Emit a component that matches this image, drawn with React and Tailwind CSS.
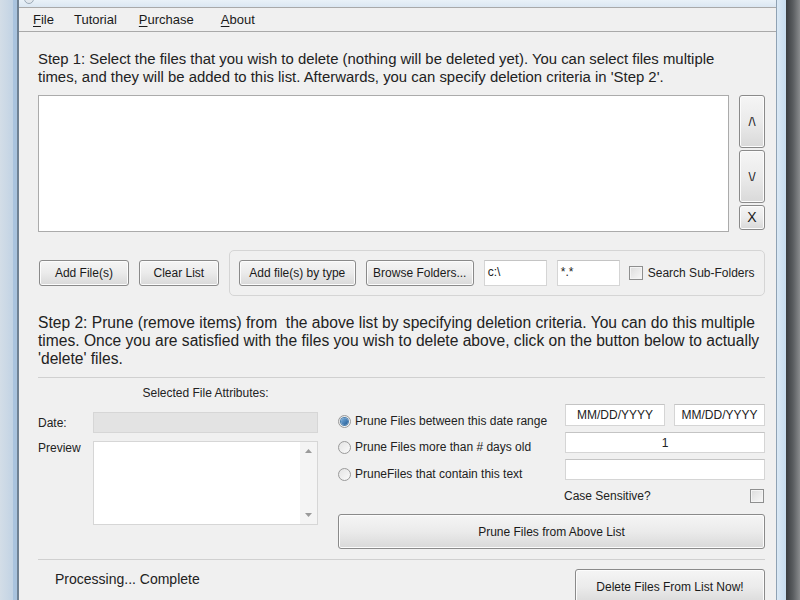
import React from "react";

const FONT = { fontFamily: '"Liberation Sans", Arial, sans-serif' };

const Button = ({ className = "", children }) => (
  <div
    className={`flex items-center justify-center rounded-[3px] border border-[#8a8a8a] bg-gradient-to-b from-[#f5f5f5] via-[#ebebeb] to-[#d9d9d9] text-[12px] text-[#1a1a1a] shadow-[inset_0_0_0_1px_#fcfcfc] ${className}`}
  >
    {children}
  </div>
);

const Input = ({ className = "", children }) => (
  <div
    className={`border border-[#d5d5d5] border-t-[#c4c4c4] bg-white text-[12px] text-[#222] ${className}`}
  >
    {children}
  </div>
);

const Radio = ({ checked }) => (
  <div className="flex h-[13px] w-[13px] shrink-0 items-center justify-center rounded-full border border-[#9a9a9a] bg-gradient-to-br from-[#e4e4e4] to-[#fafafa]">
    {checked ? (
      <div className="h-[7px] w-[7px] rounded-full bg-gradient-to-br from-[#7fb3e0] to-[#1d5a95] shadow-[0_0_0_1px_#4a7fae]" />
    ) : null}
  </div>
);

const Checkbox = () => (
  <div className="h-[14px] w-[14px] shrink-0 border border-[#8e8f8f] bg-gradient-to-br from-[#dcdcdc] to-[#f8f8f8] shadow-[inset_0_0_0_1px_#f4f4f4]" />
);

export default function App() {
  return (
    <div
      className="flex h-[600px] w-[800px] overflow-hidden bg-[#f0f0f0]"
      style={FONT}
    >
      {/* left frame */}
      <div className="flex h-full w-[19px] shrink-0">
        <div className="h-full w-[13px] bg-gradient-to-r from-[#d3dde7] to-[#c2d3e4]" />
        <div className="h-full w-[4px] bg-[#a9c3de]" />
        <div className="h-full w-[2px] bg-[#6f8193]" />
      </div>

      {/* window body */}
      <div className="flex min-w-0 flex-1 flex-col">
        <div className="relative h-[7px] shrink-0 bg-gradient-to-b from-[#e9f1f8] to-[#dbe7f2]">
          <div className="absolute left-[5px] top-[-6px] h-[10px] w-[10px] rounded-full border border-[#9aa9b7] bg-[#e2e8ee]" />
        </div>
        <div className="flex h-[25px] shrink-0 items-center border-y border-[#a9a9a9] bg-[#f0f0f0] text-[13px] text-[#1a1a1a]">
          <span className="ml-[14px]">
            <span className="underline decoration-1 underline-offset-2">F</span>ile
          </span>
          <span className="ml-[20px]">Tutorial</span>
          <span className="ml-[22px]">
            <span className="underline decoration-1 underline-offset-2">P</span>urchase
          </span>
          <span className="ml-[27px]">
            <span className="underline decoration-1 underline-offset-2">A</span>bout
          </span>
        </div>

        <div className="flex flex-1 flex-col pl-[19px] pr-[11px]">
          <p className="mt-[18px] whitespace-nowrap text-[14.9px] leading-[18px] text-[#222]">
            Step 1: Select the files that you wish to delete (nothing will be deleted yet). You can select files multiple
            <br />
            times, and they will be added to this list. Afterwards, you can specify deletion criteria in 'Step 2'.
          </p>

          <div className="mt-[9px] flex">
            <div className="h-[137px] w-[691px] border border-[#ababab] bg-white" />
            <div className="ml-[10px] flex w-[26px] flex-col">
              <Button className="h-[53px] text-[13px]">/\</Button>
              <Button className="mt-[2px] h-[53px] text-[13px]">\/</Button>
              <Button className="mt-[2px] h-[25px] text-[14px]">X</Button>
            </div>
          </div>

          <div className="mt-[18px] flex items-center">
            <Button className="ml-[1px] h-[26px] w-[90px]">Add File(s)</Button>
            <Button className="ml-[10px] h-[26px] w-[80px]">Clear List</Button>
            <div className="ml-[10px] flex h-[46px] w-[537px] items-center rounded-[5px] border border-[#d5d5d5] pl-[9px]">
              <Button className="h-[26px] w-[117px]">Add file(s) by type</Button>
              <Button className="ml-[10px] h-[26px] w-[108px]">Browse Folders...</Button>
              <Input className="ml-[10px] h-[26px] w-[63px] pl-[3px] pt-[2px]">c:\</Input>
              <Input className="ml-[10px] h-[26px] w-[63px] pl-[3px] pt-[2px]">*.*</Input>
              <div className="ml-[9px] flex items-center">
                <Checkbox />
                <span className="ml-[5px] text-[12px] text-[#222]">Search Sub-Folders</span>
              </div>
            </div>
          </div>

          <p className="mt-[18px] whitespace-nowrap text-[15.6px] leading-[18px] text-[#222]">
            Step 2: Prune (remove items) from&nbsp; the above list by specifying deletion criteria. You can do this multiple
            <br />
            times. Once you are satisfied with the files you wish to delete above, click on the button below to actually
            <br />
            'delete' files.
          </p>

          <div className="mt-[9px] h-px w-[727px] bg-[#d0d0d0]" />

          <div className="flex">
            {/* left column */}
            <div className="flex w-[280px] flex-col">
              <div className="mt-[7px] pl-[55px] text-center text-[12px] leading-[16px] text-[#222]">
                Selected File Attributes:
              </div>
              <div className="mt-[11px] flex items-center">
                <span className="w-[55px] text-[12px] text-[#222]">Date:</span>
                <div className="h-[21px] w-[225px] border border-[#d6d6d6] bg-[#e3e3e3]" />
              </div>
              <div className="mt-[8px] flex items-start">
                <span className="w-[55px] text-[12px] leading-[14px] text-[#222]">Preview</span>
                <div className="flex h-[84px] w-[225px] border border-[#d6d6d6] bg-white">
                  <div className="flex-1" />
                  <div className="flex w-[17px] flex-col items-center justify-between bg-[#f4f4f4] py-[7px]">
                    <svg width="7" height="4" viewBox="0 0 7 4">
                      <path d="M0 4 L3.5 0 L7 4 Z" fill="#9a9a9a" />
                    </svg>
                    <svg width="7" height="4" viewBox="0 0 7 4">
                      <path d="M0 0 L3.5 4 L7 0 Z" fill="#9a9a9a" />
                    </svg>
                  </div>
                </div>
              </div>
            </div>

            {/* right column */}
            <div className="ml-[20px] flex w-[427px] flex-col text-[12px] text-[#222]">
              <div className="mt-[26px] flex h-[22px] items-start">
                <div className="mt-[8px] flex w-[227px] items-center">
                  <Radio checked />
                  <span className="ml-[4px]">Prune Files between this date range</span>
                </div>
                <Input className="flex h-[22px] w-[100px] items-center justify-center">MM/DD/YYYY</Input>
                <Input className="ml-[9px] flex h-[22px] w-[91px] items-center justify-center">MM/DD/YYYY</Input>
              </div>
              <div className="mt-[6px] flex h-[21px] items-start">
                <div className="mt-[6px] flex w-[227px] items-center">
                  <Radio />
                  <span className="ml-[4px]">Prune Files more than # days old</span>
                </div>
                <Input className="flex h-[21px] w-[200px] items-center justify-center">1</Input>
              </div>
              <div className="mt-[6px] flex h-[21px] items-start">
                <div className="mt-[6px] flex w-[227px] items-center">
                  <Radio />
                  <span className="ml-[4px]">PruneFiles that contain this text</span>
                </div>
                <Input className="h-[21px] w-[200px]" />
              </div>
              <div className="mt-[8px] flex h-[15px] items-center">
                <span className="ml-[226px]">Case Sensitive?</span>
                <div className="ml-auto mr-[1px]">
                  <Checkbox />
                </div>
              </div>
              <Button className="mt-[11px] h-[35px] w-[427px]">Prune Files from Above List</Button>
            </div>
          </div>

          <div className="mt-[10px] h-px w-[727px] bg-[#d0d0d0]" />

          <div className="flex w-[727px]">
            <div className="ml-[17px] mt-[9px] text-[14px] text-[#222]">Processing... Complete</div>
            <Button className="ml-auto mt-[9px] h-[36px] w-[190px]">Delete Files From List Now!</Button>
          </div>
        </div>
      </div>

      {/* right frame */}
      <div className="flex h-full shrink-0">
        <div className="h-full w-px bg-[#8fa2b4]" />
        <div className="h-full w-[9px] bg-gradient-to-r from-[#dbe9f5] to-[#c6dcef]" />
        <div className="h-full w-[14px] bg-gradient-to-r from-[#3a3d40] via-[#5a5d60] to-[#8a8c8e]" />
      </div>
    </div>
  );
}
